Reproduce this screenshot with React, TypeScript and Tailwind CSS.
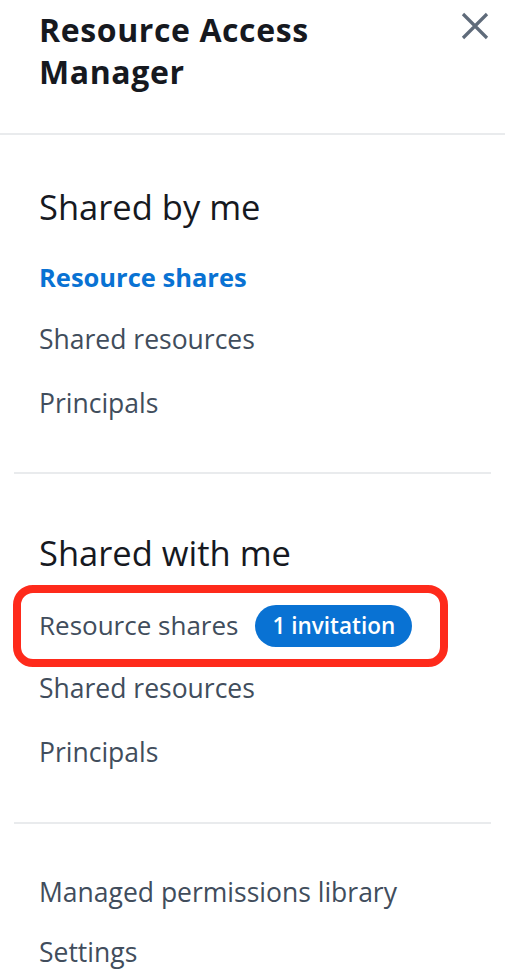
import React from "react";

const Item = ({ children, h = "h-[63.5px]" }: { children: React.ReactNode; h?: string }) => (
  <div className={`${h} flex items-center text-[26.5px] text-[#414d5c]`}>{children}</div>
);

export default function App() {
  return (
    <div className="w-[505px] h-[979px] bg-white overflow-hidden" style={{ fontFamily: '"Open Sans", sans-serif' }}>
      <div className="h-[133px] flex justify-between pl-[39px] pr-[14px] pt-[9px]">
        <div className="text-[32px] leading-[42px] font-bold tracking-[0.6px] text-[#16191f]">
          Resource Access
          <br />
          Manager
        </div>
        <svg width="30" height="30" viewBox="0 0 30 30" className="mt-[2px] mr-[1px]">
          <path d="M3 3 L27 27 M27 3 L3 27" stroke="#5f6b7a" strokeWidth="3.2" fill="none" />
        </svg>
      </div>
      <div className="h-[2px] bg-[#e9ebed]" />

      <div className="pl-[39px] pt-[50px]">
        <div className="text-[34.5px] leading-[44px] text-[#16191f]">Shared by me</div>
        <div className="mt-[16px]">
          <div className="h-[63.5px] flex items-center text-[25.5px] font-bold text-[#0972d3]">Resource shares</div>
          <Item>Shared resources</Item>
          <Item>Principals</Item>
        </div>
      </div>
      <div className="mx-[14px] mt-[36px] h-[2px] bg-[#e9ebed]" />

      <div className="pt-[57px]">
        <div className="pl-[39px] text-[34.5px] leading-[44px] text-[#16191f]">Shared with me</div>
        <div className="mt-[10px] ml-[13px] w-[435px] h-[82px] border-[8px] border-[#fe2a1b] rounded-[20px] flex items-center pl-[18px] gap-[17px]">
          <span className="text-[26px] text-[#414d5c]">Resource shares</span>
          <span className="h-[42px] px-[17px] rounded-full bg-[#0972d3] text-white text-[22.5px] font-semibold flex items-center">1 invitation</span>
        </div>
        <div className="pl-[39px] mt-[-9px]">
          <Item>Shared resources</Item>
          <Item>Principals</Item>
        </div>
      </div>
      <div className="mx-[14px] mt-[37px] h-[2px] bg-[#e9ebed]" />

      <div className="pl-[39px] pt-[39px]">
        <Item h="h-[60px]">Managed permissions library</Item>
        <Item h="h-[60px]">Settings</Item>
      </div>
    </div>
  );
}
